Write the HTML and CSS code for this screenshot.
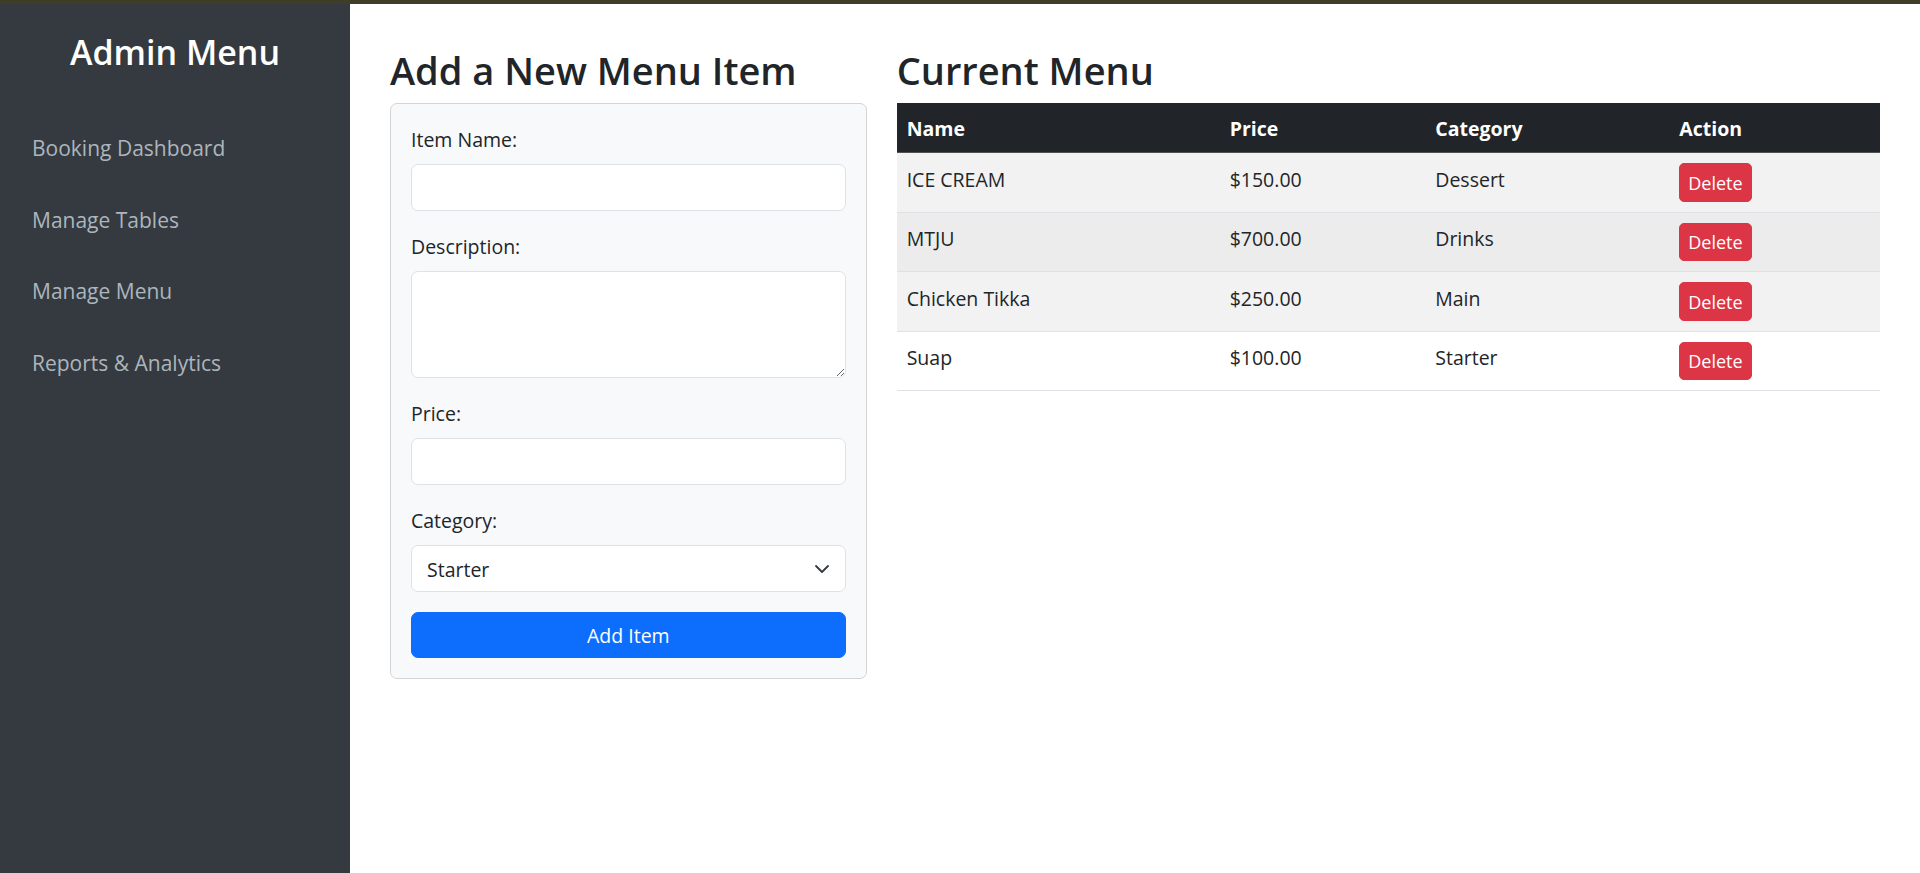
FILE: index.html
```html
<!DOCTYPE html>
<html lang="en">
<head>
<meta charset="utf-8">
<title>Admin - Manage Menu</title>
<link rel="stylesheet" href="styles.css">
</head>
<body>
<div class="topbar"></div>
<div class="layout">
  <aside class="sidebar">
    <h3 class="brand">Admin Menu</h3>
    <nav class="nav">
      <a class="nav-link" href="#">Booking Dashboard</a>
      <a class="nav-link" href="#">Manage Tables</a>
      <a class="nav-link" href="#">Manage Menu</a>
      <a class="nav-link" href="#">Reports &amp; Analytics</a>
    </nav>
  </aside>
  <main class="main">
    <div class="cols">
      <section class="form-col">
        <h2 class="page-title">Add a New Menu Item</h2>
        <form class="card">
          <div class="field">
            <label class="label" for="name">Item Name:</label>
            <input class="control" id="name" type="text">
          </div>
          <div class="field">
            <label class="label" for="desc">Description:</label>
            <textarea class="control textarea" id="desc" rows="3"></textarea>
          </div>
          <div class="field">
            <label class="label" for="price">Price:</label>
            <input class="control" id="price" type="text">
          </div>
          <div class="field">
            <label class="label" for="cat">Category:</label>
            <div class="select-wrap">
              <select class="control select" id="cat">
                <option>Starter</option>
                <option>Main</option>
                <option>Dessert</option>
                <option>Drinks</option>
              </select>
              <svg class="chevron" width="16" height="12" viewBox="0 0 16 12" aria-hidden="true"><path d="M2 3l6 6 6-6" fill="none" stroke="#343a40" stroke-width="1.8" stroke-linecap="round" stroke-linejoin="round"/></svg>
            </div>
          </div>
          <button class="btn-primary" type="button">Add Item</button>
        </form>
      </section>
      <section class="table-col">
        <h2 class="page-title">Current Menu</h2>
        <table class="menu-table">
          <colgroup>
            <col class="c-name"><col class="c-price"><col class="c-cat"><col>
          </colgroup>
          <thead>
            <tr><th>Name</th><th>Price</th><th>Category</th><th>Action</th></tr>
          </thead>
          <tbody>
            <tr class="striped"><td>ICE CREAM</td><td>$150.00</td><td>Dessert</td><td><button class="btn-danger" type="button">Delete</button></td></tr>
            <tr class="hovered"><td>MTJU</td><td>$700.00</td><td>Drinks</td><td><button class="btn-danger" type="button">Delete</button></td></tr>
            <tr class="striped"><td>Chicken Tikka</td><td>$250.00</td><td>Main</td><td><button class="btn-danger" type="button">Delete</button></td></tr>
            <tr><td>Suap</td><td>$100.00</td><td>Starter</td><td><button class="btn-danger" type="button">Delete</button></td></tr>
          </tbody>
        </table>
      </section>
    </div>
  </main>
</div>
</body>
</html>
```

FILE: styles.css
```css
* { box-sizing: border-box; }

html, body {
  margin: 0;
  padding: 0;
  height: 100%;
}

body {
  font-family: "Open Sans", "Noto Sans", "Liberation Sans", sans-serif;
  font-size: 19.5px;
  line-height: 30px;
  color: #212529;
  background: #ffffff;
  display: flex;
  flex-direction: column;
  overflow: hidden;
}

.topbar {
  height: 4px;
  background: #3f3d27;
  flex: none;
}

.layout {
  flex: 1;
  display: flex;
  min-height: 0;
}

/* Sidebar */
.sidebar {
  width: 350px;
  flex: none;
  background: #343a40;
  padding: 27px 20px 20px;
}

.brand {
  margin: 0 0 50px;
  font-size: 34px;
  line-height: 42px;
  font-weight: 600;
  color: #ffffff;
  text-align: center;
}

.nav {
  display: flex;
  flex-direction: column;
  gap: 21.5px;
}

.nav-link {
  display: block;
  padding: 10px 12px;
  font-size: 21px;
  line-height: 30px;
  color: #adb5bd;
  text-decoration: none;
}

/* Main */
.main {
  flex: 1;
  padding: 42px 40px 40px;
}

.cols {
  display: grid;
  grid-template-columns: 476.67px 1fr;
  column-gap: 30px;
  align-items: start;
}

.page-title {
  margin: 0 0 9px;
  font-size: 38px;
  line-height: 48px;
  font-weight: 600;
  color: #212529;
}

/* Form card */
.card {
  margin: 0;
  background: #f8f9fa;
  border: 1px solid #d3d4d5;
  border-radius: 7px;
  padding: 20px;
  display: flex;
  flex-direction: column;
}

.field {
  display: flex;
  flex-direction: column;
  margin-bottom: 20px;
}

.label {
  line-height: 30px;
  padding-top: 1px;
  margin-bottom: 9px;
  color: #212529;
}

.control {
  display: block;
  width: 100%;
  height: 47px;
  padding: 7.5px 15px;
  font-family: inherit;
  font-size: 19.5px;
  line-height: 30px;
  color: #212529;
  background: #ffffff;
  border: 1px solid #dee2e6;
  border-radius: 7px;
  outline: none;
}

.textarea {
  height: 107px;
  resize: vertical;
}

.select-wrap {
  position: relative;
}

.select {
  appearance: none;
  -webkit-appearance: none;
  padding-top: 8.5px;
  padding-bottom: 6.5px;
  padding-right: 50px;
}

.chevron {
  position: absolute;
  right: 16px;
  top: 17.5px;
  pointer-events: none;
}

.btn-primary {
  height: 46px;
  width: 100%;
  border: 1px solid #0d6efd;
  border-radius: 7px;
  background: #0d6efd;
  color: #ffffff;
  font-family: inherit;
  font-size: 19.5px;
  line-height: 30px;
  padding: 8px 15px 6px;
  cursor: pointer;
}

/* Table */
.menu-table {
  width: 100%;
  border-collapse: collapse;
  table-layout: fixed;
}

.c-name { width: 323px; }
.c-price { width: 205.6px; }
.c-cat { width: 244px; }

.menu-table th {
  background: #212529;
  color: #ffffff;
  font-weight: 700;
  text-align: left;
  padding: 11px 10px 8px;
  line-height: 30px;
  border-bottom: 1px solid #4d5154;
}

.menu-table td {
  padding: 10px;
  line-height: 30px;
  vertical-align: top;
  border-bottom: 1px solid #dee2e6;
  color: #212529;
}

.menu-table td:not(:last-child) {
  padding-top: 11.5px;
  padding-bottom: 8.5px;
}

.menu-table tr.striped td { background: #f2f2f2; }
.menu-table tr.hovered td { background: #ececec; }

.btn-danger {
  display: block;
  height: 38.5px;
  padding: 1px 8px 0;
  border: 1px solid #dc3545;
  border-radius: 5px;
  background: #dc3545;
  color: #ffffff;
  font-family: inherit;
  font-size: 18px;
  line-height: 26px;
  cursor: pointer;
}
```
